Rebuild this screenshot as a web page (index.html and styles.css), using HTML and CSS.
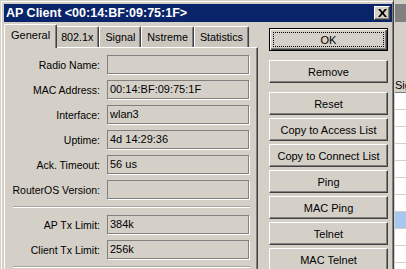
FILE: index.html
```html
<!DOCTYPE html>
<html>
<head>
<meta charset="utf-8">
<link rel="stylesheet" href="styles.css">
</head>
<body>
<div class="screen">
  <div class="window">
    <div class="titlebar">
      <span class="title">AP Client &lt;00:14:BF:09:75:1F&gt;</span>
      <span class="close"><svg width="9" height="8" viewBox="0 0 9 8"><path d="M0 0h2.2l2.3 2.7L6.8 0H9L5.7 4 9 8H6.8L4.5 5.3 2.2 8H0l3.3-4z" fill="#000"/></svg></span>
    </div>
    <div class="wbody">
      <div class="tabs-col">
        <div class="tabstrip">
          <div class="tab active">General</div>
          <div class="tab">802.1x</div>
          <div class="tab">Signal</div>
          <div class="tab">Nstreme</div>
          <div class="tab">Statistics</div>
        </div>
        <div class="panel">
          <div class="row"><span class="lbl">Radio Name:</span><span class="field"></span></div>
          <div class="row"><span class="lbl">MAC Address:</span><span class="field">00:14:BF:09:75:1F</span></div>
          <div class="row"><span class="lbl">Interface:</span><span class="field">wlan3</span></div>
          <div class="row"><span class="lbl">Uptime:</span><span class="field">4d 14:29:36</span></div>
          <div class="row"><span class="lbl">Ack. Timeout:</span><span class="field">56 us</span></div>
          <div class="row"><span class="lbl">RouterOS Version:</span><span class="field"></span></div>
          <div class="sep"></div>
          <div class="row"><span class="lbl">AP Tx Limit:</span><span class="field">384k</span></div>
          <div class="row"><span class="lbl">Client Tx Limit:</span><span class="field">256k</span></div>
          <div class="sep"></div>
        </div>
      </div>
      <div class="buttons">
        <div class="btn default"><span class="focus">OK</span></div>
        <div class="btn spaced">Remove</div>
        <div class="btn">Reset</div>
        <div class="btn">Copy to Access List</div>
        <div class="btn">Copy to Connect List</div>
        <div class="btn">Ping</div>
        <div class="btn">MAC Ping</div>
        <div class="btn">Telnet</div>
        <div class="btn">MAC Telnet</div>
      </div>
    </div>
  </div>
  <div class="behind">
    <div class="b-title"></div>
    <div class="b-area"></div>
    <div class="b-header">Sig</div>
    <div class="b-list">
      <div class="b-row"></div>
      <div class="b-row"></div>
      <div class="b-row"></div>
      <div class="b-row"></div>
      <div class="b-row"></div>
      <div class="b-row"></div>
      <div class="b-row"></div>
      <div class="b-row sel"></div>
      <div class="b-row"></div>
      <div class="b-row"></div>
    </div>
  </div>
</div>
</body>
</html>
```

FILE: styles.css
```css
* { box-sizing: border-box; }
html, body { margin: 0; padding: 0; }
body {
  width: 406px;
  height: 269px;
  overflow: hidden;
  background: #d4d0c8;
  font-family: "Liberation Sans", Arial, sans-serif;
  font-size: 11px;
  color: #000;
}
.screen {
  display: flex;
  height: 269px;
  overflow: hidden;
}
.window {
  width: 394px;
  height: 269px;
  flex: none;
  overflow: hidden;
  background: #d4d0c8;
  border-left: 1px solid #d4d0c8;
  border-top: 1px solid #d4d0c8;
  border-right: 1px solid #404040;
  box-shadow: inset 1px 1px 0 #fff, inset -1px 0 0 #808080;
  padding: 3px 1px 0 3px;
}
.titlebar {
  height: 18px;
  background: #0a246a;
  display: flex;
  align-items: center;
  justify-content: space-between;
  padding: 0 2px 0 2px;
}
.title {
  color: #fff;
  font-weight: bold;
  font-size: 12.5px;
  line-height: 14px;
}
.close {
  width: 16px;
  height: 14px;
  background: #d4d0c8;
  border-top: 1px solid #fff;
  border-left: 1px solid #fff;
  border-right: 1px solid #404040;
  border-bottom: 1px solid #404040;
  box-shadow: inset -1px -1px 0 #808080;
  display: flex;
  align-items: center;
  justify-content: center;
  padding-bottom: 1px;
}
.close svg { display: block; }
.wbody {
  display: flex;
  gap: 11px;
  padding-top: 2px;
}
.tabs-col {
  width: 254px;
  flex: none;
}
.tabstrip {
  display: flex;
  align-items: flex-end;
  height: 23px;
  padding-left: 2px;
  position: relative;
  z-index: 1;
}
.tab {
  height: 21px;
  padding: 4px 5px 0 5px;
  background: #cbc7bf;
  border-top: 1px solid #fff;
  border-left: 1px solid #fff;
  border-right: 1px solid #404040;
  box-shadow: inset -1px 0 0 #808080;
  font-size: 10.75px;
  border-radius: 2px 2px 0 0;
  color: #000;
  white-space: nowrap;
}
.tab.active {
  height: 24px;
  margin: 0 -2px -1px -2px;
  padding: 4px 6px 0 6px;
  background: #d4d0c8;
  position: relative;
  z-index: 2;
  font-size: 11px;
}
.tab.active + .tab { border-left: none; padding-left: 6px; }
.panel {
  height: 260px;
  background: #d4d0c8;
  border-top: 1px solid #fff;
  border-left: 1px solid #fff;
  border-right: 1px solid #404040;
  box-shadow: inset -1px 0 0 #808080;
  padding: 7px 7px 0 0;
  display: flex;
  flex-direction: column;
  gap: 6px;
}
.row {
  display: flex;
  align-items: center;
  height: 19px;
}
.lbl {
  width: 95px;
  flex: none;
  text-align: right;
  font-size: 10.5px;
  margin-right: 7px;
  white-space: nowrap;
}
.field {
  width: 142px;
  height: 19px;
  border: 1px solid #808080;
  box-shadow: 1px 1px 0 #fff;
  padding: 0 2px;
  line-height: 17px;
  white-space: nowrap;
}
.sep {
  height: 2px;
  margin: 1px 0 1px 8px;
  border-top: 1px solid #a9a59f;
  border-bottom: 1px solid #fff;
}
.buttons {
  width: 119px;
  flex: none;
  display: flex;
  flex-direction: column;
  gap: 3px;
  padding-top: 4px;
}
.btn {
  height: 23px;
  flex: none;
  background: #d4d0c8;
  border-top: 1px solid #fff;
  border-left: 1px solid #fff;
  border-right: 1px solid #404040;
  border-bottom: 1px solid #404040;
  box-shadow: inset -1px -1px 0 #808080;
  display: flex;
  align-items: center;
  justify-content: center;
  white-space: nowrap;
}
.btn.default {
  border: 1px solid #000;
  box-shadow: inset 1px 1px 0 #fff, inset -1px -1px 0 #404040, inset -2px -2px 0 #808080;
  margin-bottom: 6px;
  padding: 3px;
}
.btn.spaced { margin-bottom: 6px; }
.focus {
  flex: 1;
  align-self: stretch;
  border: 1px dotted #000;
  display: flex;
  align-items: center;
  justify-content: center;
}
.behind {
  flex: 1;
  display: flex;
  flex-direction: column;
  border-left: 1px solid #d4d0c8;
  overflow: hidden;
}
.b-title {
  height: 18px;
  flex: none;
  margin-top: 4px;
  background: #808080;
}
.b-area {
  height: 56px;
  flex: none;
}
.b-header {
  height: 15px;
  flex: none;
  line-height: 14px;
  font-size: 11px;
  white-space: nowrap;
  overflow: hidden;
  border-bottom: 1px solid #808080;
}
.b-list {
  flex: 1;
  background: #fff;
}
.b-row {
  height: 17px;
  border-bottom: 1px solid #d4d0c8;
}
.b-row.sel { background: #a6c8f0; }
```
